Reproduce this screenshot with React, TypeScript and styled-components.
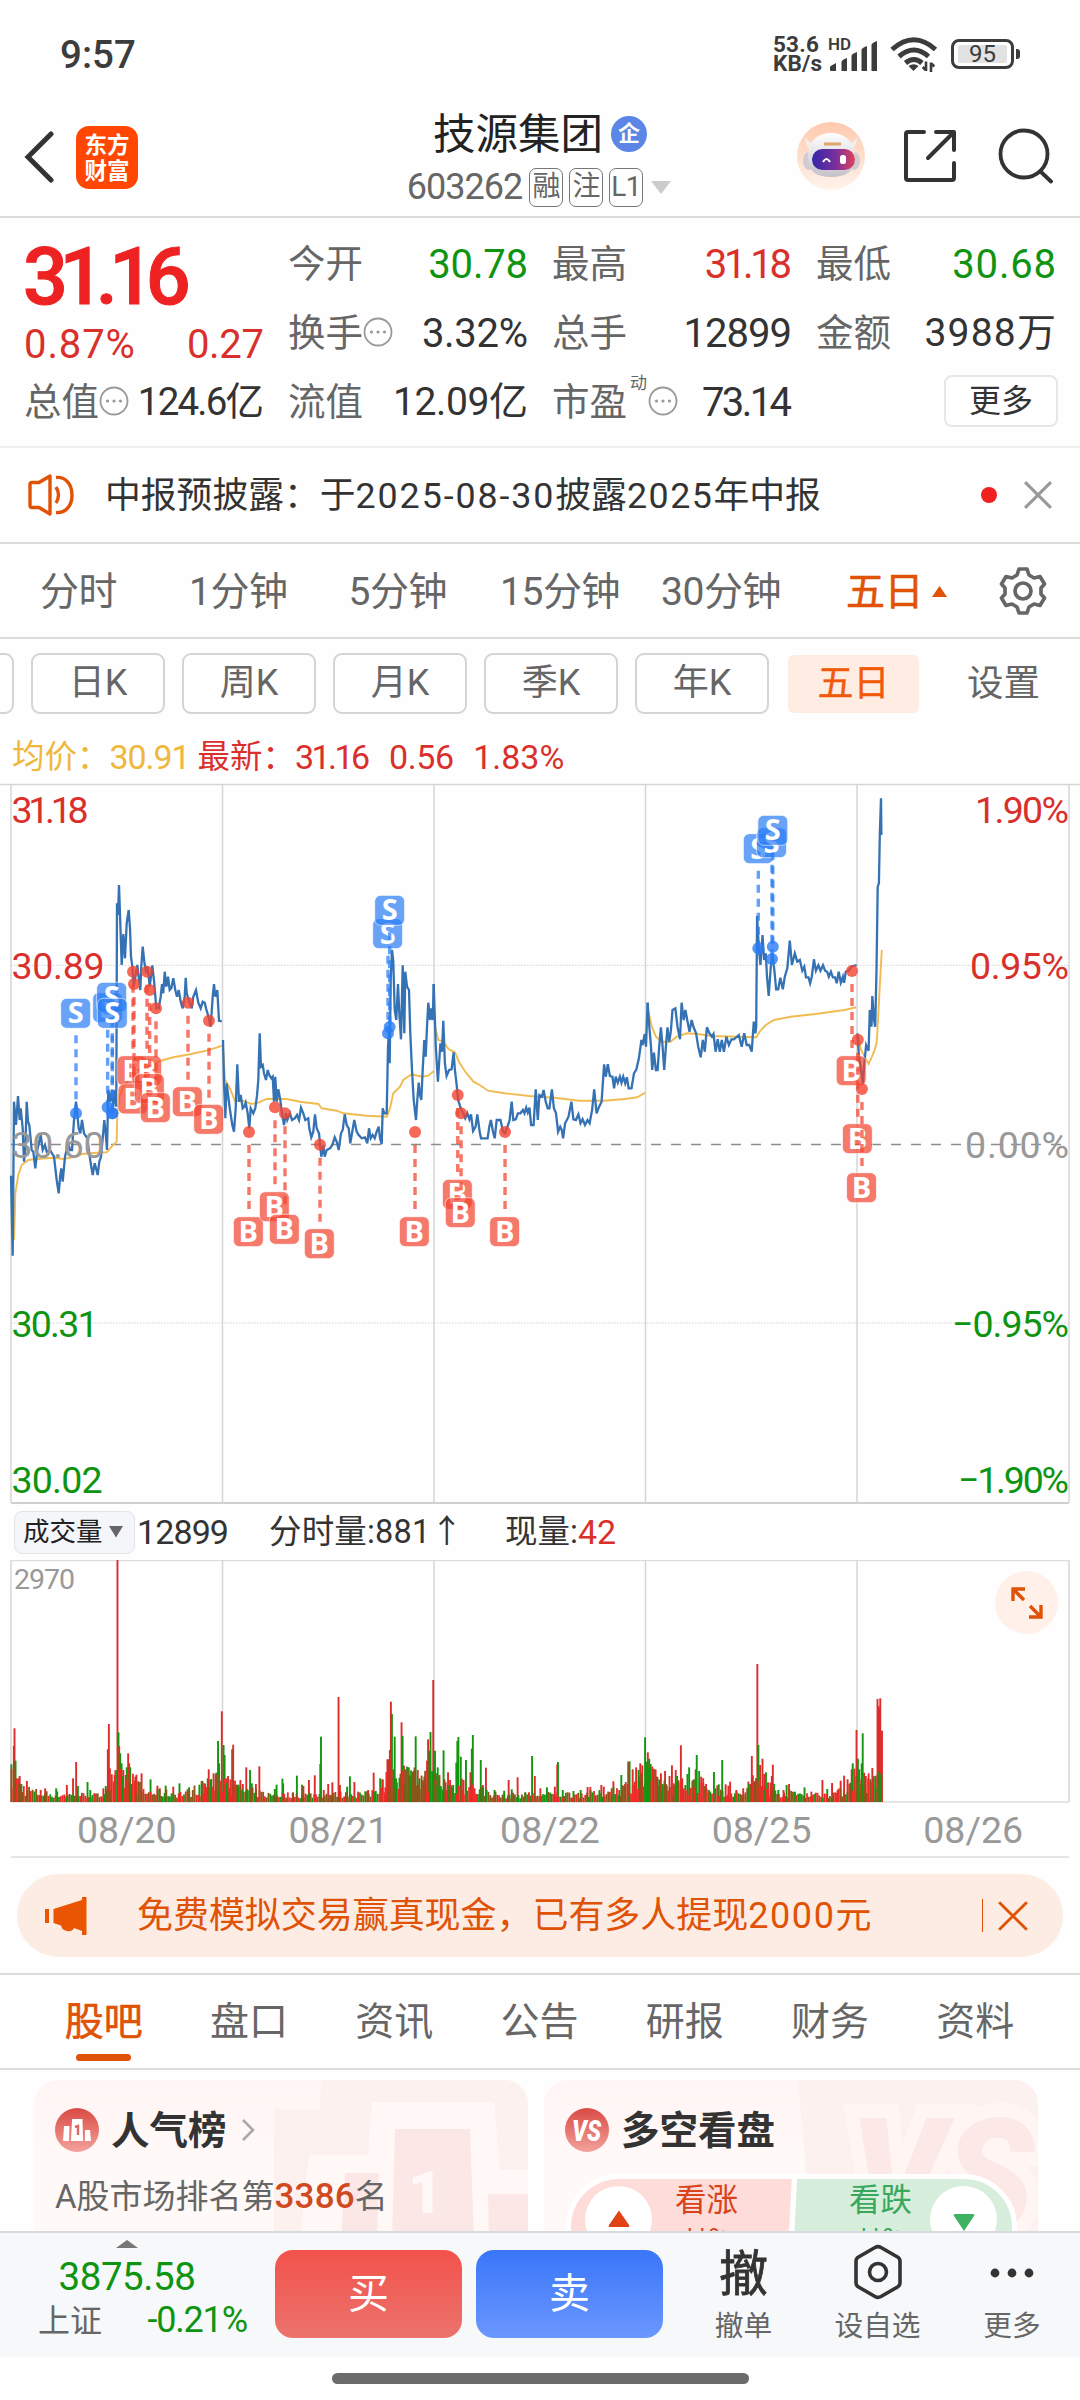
import React from 'react';
import styled, { createGlobalStyle } from 'styled-components';

const RED = '#d9302c';
const GREEN = '#0f9412';
const ORANGE = '#e05206';
const INK = '#333';
const GREY = '#666';
const SANS = `Roboto, "Noto Sans CJK SC", sans-serif`;

const Global = createGlobalStyle`
  *, *::before, *::after { box-sizing: border-box; }
  body { margin: 0; background: #fff; font-family: ${SANS}; color: ${INK}; }
  svg { display: block; flex: none; }
`;

const Page = styled.div`
  width: 1080px;
  height: 2400px;
  display: flex;
  flex-direction: column;
  overflow: hidden;
  background: #fefefe;
  line-height: 1.2;
  white-space: nowrap;
`;

type TextProps = { $s: number; $c?: string; $ls?: number; $w?: number; $mr?: number };
const Text = styled.span<TextProps>`
  font-size: ${p => p.$s}px;
  color: ${p => p.$c ?? INK};
  letter-spacing: ${p => p.$ls ?? 0}px;
  margin-right: ${p => (p.$mr ?? 0) - (p.$ls ?? 0)}px;
  font-weight: ${p => p.$w ?? 400};
`;

/* ---------- status bar ---------- */
const StatusBar = styled.div`
  flex: none;
  height: 108px;
  padding: 0 60px 0 60px;
  display: flex;
  justify-content: space-between;
  align-items: center;
`;
const Clock = styled.div`
  padding-top: 3px;
  font-size: 38.5px;
  font-weight: 500;
  color: #3c3c3c;
`;
const StatusRight = styled.div`
  display: flex;
  align-items: center;
`;
const Speed = styled.div`
  display: flex;
  flex-direction: column;
  width: 55px;
  font-size: 22.5px;
  letter-spacing: 0.2px;
  line-height: 19px;
  font-weight: 700;
  color: #3c3c3c;
`;
const Battery = styled.div`
  margin-left: 13px;
  width: 63px;
  height: 30px;
  border: 3px solid #3c3c3c;
  border-radius: 8px;
  padding: 3px 4px;
  display: flex;
`;
const Charge = styled.div`
  flex: 1;
  background: #e2e2e2;
  border-radius: 2px;
  font-size: 24px;
  line-height: 19px;
  text-align: center;
  color: #3c3c3c;
`;
const Nub = styled.div`
  width: 4px;
  height: 10px;
  margin-left: 2px;
  border-radius: 0 3px 3px 0;
  background: #3c3c3c;
`;

/* ---------- header ---------- */
const Header = styled.header`
  flex: none;
  height: 110px;
  border-bottom: 2px solid #dcdcdc;
  display: grid;
  grid-template-columns: 1fr auto 1fr;
`;
const HeadLeft = styled.div`
  display: flex;
  align-items: center;
  gap: 22px;
  padding: 2px 0 12px 24px;
`;
const AppLogo = styled.div`
  width: 62px;
  height: 63px;
  border-radius: 13px;
  background: #ff4602;
  color: #fff;
  font-size: 22.5px;
  line-height: 26px;
  font-weight: 700;
  text-align: center;
  padding-top: 6px;
`;
const HeadMid = styled.div`
  display: flex;
  flex-direction: column;
  align-items: center;
  padding-top: 1px;
`;
const TitleRow = styled.div`
  display: flex;
  align-items: center;
  height: 51px;
  gap: 8px;
`;
const Enterprise = styled.div`
  width: 36px;
  height: 36px;
  margin-top: -2px;
  border-radius: 50%;
  background: #5b86e5;
  color: #fff;
  font-size: 22px;
  line-height: 35px;
  font-weight: 700;
  text-align: center;
`;
const CodeRow = styled.div`
  display: flex;
  align-items: center;
  height: 55px;
  gap: 6px;
`;
const Tag = styled.div`
  height: 39px;
  width: 34px;
  border: 1.5px solid #777;
  border-radius: 7px;
  font-size: 28px;
  line-height: 36px;
  letter-spacing: -0.5px;
  text-align: center;
  color: ${GREY};
`;
const HeadRight = styled.div`
  display: flex;
  justify-content: flex-end;
  align-items: center;
  padding: 1px 27px 13px 0;
`;

/* ---------- quote ---------- */
const Quote = styled.section`
  flex: none;
  height: 230px;
  padding: 12px 24px 0;
  border-bottom: 2px solid #efefef;
  display: grid;
  grid-template-columns: repeat(4, 240px);
  grid-template-rows: repeat(3, 69px);
  column-gap: 24px;
`;
const Price = styled.div`
  grid-row: span 2;
  display: flex;
  flex-direction: column;
`;
const PriceBig = styled.div`
  height: 91px;
  line-height: 94px;
  font-size: 79px;
  font-weight: 500;
  -webkit-text-stroke: 1px #ee2222;
  letter-spacing: -8.5px;
  margin-left: -1px;
  color: #ee2222;
`;
const Cell = styled.div`
  display: flex;
  align-items: center;
  justify-content: space-between;
`;
const Label = styled.span`
  font-size: 37.5px;
  color: ${GREY};
  display: flex;
  align-items: center;
`;
const Sup = styled.sup`
  font-size: 17px;
  line-height: 20px;
  align-self: flex-start;
  margin: -7px 1px 0 3px;
`;
const MoreButton = styled.button`
  width: 114px;
  height: 52px;
  margin: -3px -2px 0 auto;
  border: 2px solid #e6e7ea;
  border-radius: 8px;
  background: #fff;
  font: 32px/49px ${SANS};
  color: ${INK};
  padding: 0;
`;

/* ---------- notice ---------- */
const Notice = styled.section`
  flex: none;
  height: 96px;
  border-bottom: 2px solid #dcdcdc;
  display: flex;
  align-items: center;
  padding: 0 28px 0 28px;
`;
const NoticeText = styled.div`
  flex: 1;
  margin-left: 30px;
  padding-top: 2px;
  font-size: 35.8px;
`;
const Wide = styled.span<{ $ls: number }>`
  letter-spacing: ${p => p.$ls}px;
`;
const RedDot = styled.div`
  width: 16px;
  height: 16px;
  margin-right: 27px;
  border-radius: 50%;
  background: #f02020;
`;

/* ---------- periods ---------- */
const Periods = styled.nav`
  flex: none;
  height: 95px;
  border-bottom: 2px solid #dcdcdc;
  display: flex;
  align-items: center;
  justify-content: space-between;
  padding: 0 33px 0 40px;
`;
const Period = styled.span<{ $on?: boolean; $gap?: number }>`
  display: flex;
  align-items: center;
  padding-top: 3px;
  font-size: 39px;
  letter-spacing: -0.4px;
  -webkit-text-stroke: ${p => (p.$on ? 0.6 : 0)}px ${ORANGE};
  color: ${p => (p.$on ? ORANGE : GREY)};
  margin-right: ${p => p.$gap ?? 0}px;
`;
const Chips = styled.div`
  flex: none;
  height: 89px;
  display: flex;
  align-items: center;
  margin-left: -120px;
  gap: 17px;
`;
const Chip = styled.div<{ $on?: boolean }>`
  flex: none;
  width: ${p => (p.$on ? 131 : 134)}px;
  height: ${p => (p.$on ? 58 : 61)}px;
  margin-left: ${p => (p.$on ? 2 : 0)}px;
  border: ${p => (p.$on ? 'none' : '2px solid #d4d4d4')};
  border-radius: ${p => (p.$on ? 6 : 9)}px;
  background: ${p => (p.$on ? '#ffece3' : 'transparent')};
  color: ${p => (p.$on ? '#f05a0a' : GREY)};
  font-size: 36px;
  -webkit-text-stroke: ${p => (p.$on ? 0.4 : 0)}px #f05a0a;
  line-height: ${p => (p.$on ? 58 : 57)}px;
  text-align: center;
`;
const ChipSetting = styled.span`
  margin-left: 31px;
  font-size: 36.5px;
  color: ${GREY};
`;
const Legend = styled.div`
  flex: none;
  height: 55px;
  padding: 3px 0 0 12px;
  display: flex;
  align-items: center;
`;

/* ---------- chart ---------- */
const VolumeBar = styled.div`
  flex: none;
  height: 56px;
  padding-left: 14px;
  display: flex;
  align-items: center;
`;
const VolumePick = styled.div`
  width: 121px;
  height: 43px;
  border: 1.5px solid #e2e4ea;
  border-radius: 8px;
  background: #f5f6fa;
  display: flex;
  align-items: center;
  gap: 6px;
  padding-left: 8px;
  margin-right: 2px;
`;
const VolumeWrap = styled.div`
  flex: none;
  height: 243px;
  position: relative;
`;
const Expand = styled.div`
  position: absolute;
  top: 11px;
  right: 22px;
  width: 63px;
  height: 63px;
  border-radius: 50%;
  background: #fff0e9;
  display: grid;
  place-items: center;
`;
const Dates = styled.div`
  flex: none;
  height: 55px;
  margin: 0 11px;
  padding: 2px 0 0 10px;
  border-bottom: 2px solid #e4e4e4;
  display: grid;
  grid-template-columns: repeat(5, 211.6px);
  align-items: center;
  justify-items: center;
`;

/* ---------- banner ---------- */
const Banner = styled.div`
  flex: none;
  height: 83px;
  margin: 16px 17px;
  border-radius: 42px;
  background: #fdece3;
  display: flex;
  align-items: center;
  padding: 0 35px 0 28px;
`;
const BannerText = styled.div`
  flex: 1;
  margin-left: 50px;
  padding-top: 3px;
  font-size: 36px;
  letter-spacing: -0.05px;
  color: ${ORANGE};
`;
const BannerRule = styled.div`
  width: 1.5px;
  height: 33px;
  margin-right: 15px;
  background: ${ORANGE};
`;

/* ---------- tabs ---------- */
const Tabs = styled.nav`
  flex: none;
  height: 97px;
  border-top: 2px solid #dcdcdc;
  border-bottom: 2px solid #dcdcdc;
  padding: 0 32px 0 31px;
  display: grid;
  grid-template-columns: repeat(7, 1fr);
`;
const Tab = styled.div<{ $on?: boolean }>`
  display: flex;
  flex-direction: column;
  align-items: center;
  font-size: 39px;
  line-height: 95px;
  height: 93px;
  -webkit-text-stroke: ${p => (p.$on ? 0.6 : 0)}px ${ORANGE};
  color: ${p => (p.$on ? ORANGE : GREY)};
  &::after {
    content: '';
    width: 55px;
    height: 7px;
    margin-top: -16px;
    border-radius: 4px;
    background: ${p => (p.$on ? ORANGE : 'transparent')};
  }
`;

/* ---------- cards ---------- */
const Cards = styled.section`
  flex: none;
  height: 161px;
  padding: 10px 42px 0 34px;
  display: flex;
  gap: 16px;
  overflow: hidden;
`;
const Card = styled.div`
  position: relative;
  width: 494px;
  height: 240px;
  border-radius: 24px;
  overflow: hidden;
  background: linear-gradient(#fff5f4, #fffaf8 40%);
`;
const CardArt = styled.svg`
  position: absolute;
  inset: 0;
`;
const CardHead = styled.div`
  position: relative;
  display: flex;
  align-items: center;
  height: 44px;
  margin: 28px 0 0 21px;
`;
const CardTitle = styled.span`
  margin: 0 14px 0 12px;
  padding-top: 2px;
  font-size: 38.5px;
  font-weight: 700;
`;
const Rank = styled.div`
  position: relative;
  margin: 25px 0 0 21px;
  font-size: 33px;
  line-height: 40px;
  color: ${GREY};
`;
const Vote = styled.div`
  position: relative;
  margin: 22px 0 0 22px;
  width: 451px;
  height: 106px;
  border: 5px solid #fff;
  border-radius: 53px;
  overflow: hidden;
  display: flex;
  justify-content: space-between;
  padding: 7px 15px 0 14px;
  background: linear-gradient(93deg, #fddcd9 0 49.4%, #fff 49.6% 50.6%, #d7eedd 50.8%);
`;
const VoteSide = styled.div<{ $gap: number }>`
  display: flex;
  gap: ${p => p.$gap}px;
`;
const VoteDisc = styled.div`
  width: 67px;
  height: 67px;
  border-radius: 50%;
  background: #fff;
  display: flex;
  justify-content: center;
`;
const VoteText = styled.div<{ $c: string }>`
  display: flex;
  flex-direction: column;
  align-items: center;
  margin-top: -4px;
  font-size: 31.5px;
  line-height: 38px;
  color: ${p => p.$c};
`;
const VotePct = styled.span`
  font-size: 29px;
  line-height: 39px;
`;

/* ---------- bottom bar ---------- */
const Dock = styled.footer`
  flex: none;
  height: 126px;
  border-top: 2px solid #d8dade;
  background: #f6f8fa;
  display: flex;
`;
const Index = styled.div`
  width: 254px;
  margin-right: 21px;
  display: flex;
  flex-direction: column;
  align-items: center;
  padding-top: 7px;
`;
const IndexValue = styled.div`
  margin-top: 8px;
  height: 43px;
  line-height: 42px;
  font-size: 38.5px;
  letter-spacing: -0.4px;
  color: ${GREEN};
`;
const IndexRow = styled.div`
  width: 100%;
  padding: 0 6px 0 38px;
  display: flex;
  align-items: center;
  justify-content: space-between;
  height: 44px;
`;
const Trade = styled.button<{ $from: string; $to: string }>`
  width: 187px;
  height: 88px;
  margin: 17px 14px 0 0;
  border: 0;
  border-radius: 18px;
  background: linear-gradient(${p => p.$from}, ${p => p.$to});
  color: #fff;
  font: 41px/88px ${SANS};
  padding: 0;
`;
const Action = styled.div<{ $w: number }>`
  width: ${p => p.$w}px;
  display: flex;
  flex-direction: column;
  align-items: center;
  padding-top: 10px;
`;
const ActionIcon = styled.div<{ $drop?: number }>`
  height: 57px;
  display: flex;
  align-items: center;
  font-size: 49px;
  -webkit-text-stroke: 0.8px ${INK};
  line-height: 57px;
  padding-top: ${p => p.$drop ?? 0}px;
`;
const ActionLabel = styled.div`
  margin-top: 9px;
  font-size: 28.7px;
  line-height: 34px;
  color: ${GREY};
`;
const HomeArea = styled.div`
  flex: none;
  height: 43px;
  display: flex;
  justify-content: center;
  padding-top: 16px;
`;
const HomeBar = styled.div`
  width: 417px;
  height: 11px;
  border-radius: 6px;
  background: #6b6b6b;
`;

/* ---------- chart data ---------- */
type Frame = { x: number; kx: number };
const LEFT: Frame = { x: 0, kx: 1 / 3 };
const RIGHT: Frame = { x: 430, kx: 650 / 1568 };

const px = (f: Frame, x: number) => f.x + x * f.kx;
const py = (y: number) => 780 + y / 3;

const toPoints = (f: Frame, raw: string) =>
  raw
    .trim()
    .split(/\s+/)
    .map(p => {
      const [x, y] = p.split(',').map(Number);
      return `${px(f, x).toFixed(1)},${py(y).toFixed(1)}`;
    })
    .join(' ');

const DAYS: { f: Frame; price: string; avg: string }[] = [
  {
    f: LEFT,
    price: `33,1187 38,1427 42,965 48,1035 54,948 59,1020 62,985 68,1045 72,1145 76,1110 80,965 84,1025 88,1035 95,1110 100,1115 106,1165 112,1110 122,1065 128,1110 135,1095 140,1115 150,1110 162,1130 170,1200 176,1240 181,1185 184,1165 188,1205 195,1130 205,1090 210,1110 216,1110 222,1020 228,965 236,1045 241,1060 246,1020 252,1060 262,1075 268,1120 272,1150 278,1185 284,1150 288,1165 293,1185 298,1145 303,1130 308,1075 313,1020 317,1060 321,1110 325,930 331,965 336,930 340,980 345,930 349,980 351,370 354,405 357,315 361,430 365,555 370,462 375,535 380,430 386,390 390,445 393,530 397,560 401,620 406,590 412,555 417,600 421,630 424,560 428,500 433,545 438,580 443,560 449,620 457,556 463,610 469,685 476,685 482,650 486,612 490,640 494,575 499,620 504,590 509,630 514,625 520,595 526,630 531,650 536,630 542,665 548,685 554,650 557,593 560,640 566,660 575,685 580,650 588,630 595,668 602,685 608,665 614,668 618,685 624,705 632,740 638,650 642,612 646,650 652,630 657,722 665,724`,
    avg: `42,1380 44,1320 46,1240 55,1185 65,1155 85,1140 110,1137 160,1133 190,1137 230,1130 245,1122 290,1118 320,1117 335,1100 350,1085 352,1000 358,950 370,920 400,880 430,865 480,843 520,832 570,823 620,812 668,797`,
  },
  {
    f: LEFT,
    price: `669,780 672,905 676,1015 680,910 685,950 690,990 697,1035 702,1055 707,985 712,853 717,965 722,945 728,985 733,980 737,968 743,1000 748,1045 752,985 760,1000 766,985 771,947 775,900 779,760 783,860 788,855 792,880 798,900 803,870 808,885 814,895 818,890 822,965 826,890 830,965 835,928 841,960 846,1000 852,1035 858,1000 862,1020 870,1000 876,1020 884,1015 891,1005 897,1020 903,983 910,1000 916,1020 925,1015 928,1045 934,1072 940,1055 945,1003 950,1045 957,1060 961,1100 964,1130 970,1095 974,1130 980,1110 990,1105 997,1095 1004,1072 1010,1085 1016,1110 1023,1060 1028,1050 1034,1003 1040,1035 1046,1045 1051,1090 1056,1060 1063,1020 1070,1055 1076,1065 1085,1075 1095,1072 1102,1090 1107,1045 1112,1075 1118,1065 1124,1075 1130,1055 1136,1040 1140,1075 1145,1093 1148,985 1153,1000 1160,1000 1164,800 1168,740 1169,850 1172,600 1176,510 1180,545 1184,690 1189,720 1194,612 1198,700 1203,778 1208,556 1213,760 1216,575 1221,620 1227,630 1231,760 1236,870 1241,960 1248,1020 1252,960 1256,908 1260,945 1264,960 1268,870 1273,780 1277,830 1281,740 1285,668 1290,720 1294,685 1298,720 1301,612`,
    avg: `669,800 675,900 690,925 705,963 730,963 755,972 775,968 800,957 860,957 900,965 955,972 965,985 1010,992 1030,1000 1100,1007 1160,1010 1170,985 1180,940 1200,920 1210,900 1235,883 1265,890 1285,887 1302,873`,
  },
  {
    f: RIGHT,
    price: `9,612 14,800 19,905 25,790 29,815 32,722 36,850 40,888 46,870 52,868 57,817 60,870 64,910 68,960 74,985 80,1000 85,1015 90,1000 95,1018 99,1003 104,1053 110,1040 114,1003 120,1055 123,1075 139,1075 143,1040 147,1020 152,1055 156,1075 161,1020 170,1020 176,1055 181,1060 187,1040 192,1020 197,965 201,1020 207,1018 212,1000 218,1000 224,990 228,1000 232,983 236,998 240,983 244,1035 250,1035 255,928 260,1020 264,945 270,950 274,930 279,965 284,985 288,985 294,928 299,985 304,1000 309,1055 314,1040 318,1050 321,1075 326,1030 334,1010 341,965 346,1018 352,1020 358,1003 363,1030 368,1018 374,1035 380,1020 385,1030 391,990 396,928 402,1000 408,980 414,965 420,853 424,890 429,853 434,888 440,890 444,925 448,890 453,908 458,890 462,908 466,890 471,910 475,892 479,925 486,925 492,880 498,868 504,835 510,780 513,795 518,762 521,800 525,668`,
    avg: `12,740 20,780 32,785 45,808 60,817 70,845 85,875 105,905 120,915 140,932 180,940 240,948 300,953 360,962 420,962 470,957 500,952 519,938`,
  },
  {
    f: RIGHT,
    price: `525,668 529,740 533,800 536,870 540,818 545,870 549,870 553,800 557,742 561,800 565,870 569,800 573,742 577,785 581,755 585,690 592,685 597,740 603,778 607,668 612,720 616,690 621,722 626,755 631,720 636,742 642,760 647,800 653,832 658,780 663,815 668,742 674,760 680,770 684,762 689,815 694,778 699,815 704,780 709,815 715,770 721,795 727,778 733,778 745,765 752,800 758,760 764,795 770,795 776,815 781,725 785,760 787,740 789,408 793,500 797,555 802,465 806,540 810,520 813,590 817,648 822,560 826,520 831,575 835,628 840,628 845,593 851,628 856,590 862,565 868,482 873,555 880,520 886,545 892,540 898,572 903,560 907,592 913,592 917,610 921,590 926,538 931,572 937,556 942,572 948,556 953,572 958,575 962,590 967,575 972,592 977,592 981,610 986,575 991,608 996,590 999,608 1003,575 1010,572 1016,560 1029,555`,
    avg: `526,690 535,740 545,770 560,785 580,785 595,770 620,760 645,762 680,768 740,770 787,772 795,755 810,735 830,720 870,710 930,702 1000,690 1028,682`,
  },
  {
    f: RIGHT,
    price: `1031,760 1035,830 1040,870 1044,910 1048,850 1052,795 1058,812 1061,690 1065,740 1067,648 1071,720 1074,740 1077,570 1080,320 1083,310 1085,165 1088,55 1089,165`,
    avg: `1032,770 1040,810 1050,835 1058,852 1066,830 1072,812 1077,790 1079,760 1084,640 1090,510`,
  },
];

type Mark = [Frame, 'B' | 'S', number, number, number, number];
const MARKS: Mark[] = [
  [LEFT, 'S', 227, 700, 228, 1000],
  [LEFT, 'S', 323, 683, 323, 982],
  [LEFT, 'S', 335, 652, 337, 1000],
  [LEFT, 'S', 337, 700, 337, 1000],
  [LEFT, 'S', 1163, 461, 1164, 760],
  [LEFT, 'S', 1169, 391, 1169, 741],
  [LEFT, 'B', 396, 872, 399, 575],
  [LEFT, 'B', 440, 872, 441, 575],
  [LEFT, 'B', 399, 957, 402, 612],
  [LEFT, 'B', 448, 926, 449, 630],
  [LEFT, 'B', 466, 983, 468, 685],
  [LEFT, 'B', 562, 965, 564, 668],
  [LEFT, 'B', 626, 1018, 627, 722],
  [LEFT, 'B', 745, 1355, 747, 1056],
  [LEFT, 'B', 823, 1280, 825, 982],
  [LEFT, 'B', 853, 1348, 855, 1000],
  [LEFT, 'B', 958, 1391, 960, 1094],
  [LEFT, 'B', 1243, 1355, 1245, 1056],
  [RIGHT, 'B', 66, 1243, 67, 945],
  [RIGHT, 'B', 73, 1298, 75, 1000],
  [RIGHT, 'B', 180, 1355, 181, 1056],
  [RIGHT, 'B', 1016, 872, 1018, 573],
  [RIGHT, 'B', 1031, 1076, 1032, 779],
  [RIGHT, 'B', 1041, 1223, 1042, 927],
  [RIGHT, 'S', 792, 206, 792, 505],
  [RIGHT, 'S', 824, 188, 825, 537],
  [RIGHT, 'S', 827, 151, 827, 500],
];

const GRID_X = [11, 222.5, 434, 645.5, 857, 1069];

const Axis = ({ y, c, l, r, lw, rw }: { y: number; c: string; l: string; r: string; lw: number; rw: number }) => (
  <g fill={c} fontSize="37.5" fontFamily={SANS}>
    <text x={11.5} y={y} textLength={lw}>{l}</text>
    <text x={1069 - rw} y={y} textLength={rw}>{r}</text>
  </g>
);

const PriceChart = () => (
  <svg width="1080" height="721" viewBox="0 783 1080 721">
    <path d="M0 784.5H1080" stroke="#d6d6d6" strokeWidth="1.6" />
    {GRID_X.map(x => (
      <path key={x} d={`M${x} 785V1503`} stroke="#d6d6d6" strokeWidth="1.5" />
    ))}
    <path d="M11 1503H1069" stroke="#d0d0d0" strokeWidth="2" />
    <path d="M11 965.3H1069M11 1323H1069" stroke="#d2d2d2" strokeWidth="1" strokeDasharray="1.5 1.5" />
    <path d="M11 1144.5H1069" stroke="#8c8c8c" strokeWidth="1.7" strokeDasharray="10 10" />
    {DAYS.map((d, i) => (
      <polyline key={i} points={toPoints(d.f, d.avg)} fill="none" stroke="#f0bb50" strokeWidth="1.9" />
    ))}
    {DAYS.map((d, i) => (
      <polyline key={i} points={toPoints(d.f, d.price)} fill="none" stroke="#3572b4" strokeWidth="2.3" />
    ))}
    <Axis y={823} c={RED} l="31.18" r="1.90%" lw={77} rw={94} />
    <Axis y={979} c={RED} l="30.89" r="0.95%" lw={93} rw={99} />
    <Axis y={1158} c="#999" l="30.60" r="0.00%" lw={93} rw={104} />
    <Axis y={1336.5} c={GREEN} l="30.31" r="−0.95%" lw={87} rw={117} />
    <Axis y={1492.5} c={GREEN} l="30.02" r="−1.90%" lw={91} rw={111} />
    {MARKS.map(([f, kind, bx, by, dx, dy], i) => {
      const sell = kind === 'S';
      const x = px(f, bx);
      const y = py(by);
      const X = px(f, dx);
      const Y = py(dy);
      const c = sell ? '#2a7df5' : '#f4432f';
      return (
        <g key={i}>
          <path
            d={sell ? `M${X} ${y + 22}V${Y}` : `M${X} ${Y + 13}V${y - 20}`}
            stroke={c}
            opacity="0.72"
            strokeWidth="3.4"
            strokeDasharray="8 6"
          />
          <circle cx={X} cy={Y} r="6" fill={c} opacity="0.8" />
          <rect x={x - 15} y={y - 15} width="30" height="30" rx="6" fill={c} opacity="0.7" stroke="#fff" strokeWidth="0.8" />
          <text
            x={x}
            y={y + 10}
            textAnchor="middle"
            fontSize="29"
            fontWeight="700"
            fontFamily='"Open Sans", sans-serif'
            fill="#fff"
          >
            {kind}
          </text>
        </g>
      );
    })}
  </svg>
);

/* volume peaks: position, top edge, r(ise) or g(fall) */
const PEAKS_A =
  '33,853,g 40,798,r 42,745,r 45,842,g 53,895,r 57,888,r 62,912,g 78,903,r 118,930,r 131,925,r 163,925,g 194,915,r 212,895,r 221,846,r 226,918,g 254,906,g 262,930,g 300,925,r 307,918,g 313,808,r 316,732,r 319,865,r 333,885,r 341,240,r 344,757,g 346,798,r 349,820,g 353,850,g 358,870,r 365,885,r 368,862,g 372,820,r 375,850,r 378,862,g 383,912,g 393,890,r 396,884,r 411,880,r 437,898,g 457,917,r 464,925,r 481,917,g 503,920,r 521,910,g 549,922,g 579,914,g 588,903,r 593,910,r 603,895,g 606,868,r 613,897,g 620,880,r 628,878,g 633,783,g 636,850,g 644,694,r 649,795,g 652,825,g 657,895,r 662,888,r 669,898,r 674,808,g 677,794,r 681,915,g 690,917,r 698,900,r 705,912,r 715,862,r 726,870,g 731,910,g 743,912,r 753,859,r 798,927,g 803,914,g 820,896,g 822,910,g 850,938,r 862,887,g 877,914,g 881,918,r 897,900,r 914,886,r 930,852,g 932,770,g 940,930,r 953,912,r 965,907,r 983,651,r 987,915,r 1008,920,g 1016,889,g 1029,906,r 1040,935,r 1069,930,r 1085,878,r 1104,895,g 1110,898,r 1119,922,r 1125,838,r 1128,838,r 1132,810,g 1135,665,r 1138,702,g 1143,868,g 1146,770,g 1150,895,g 1160,893,g 1166,727,r 1169,768,g 1173,857,r 1178,868,g 1182,860,g 1187,862,g 1192,890,g 1202,873,g 1207,769,g 1213,870,r 1218,895,g 1225,900,r 1232,890,r 1240,842,r 1243,778,r 1247,812,g 1250,756,g 1258,600,r 1263,812,g 1266,880,g 1271,862,g 1276,885,r 1288,811,g 1294,907,r 1301,877,r 1307,900,r 1314,922,g 1325,848,g 1328,783,g 1331,771,g 1338,830,g 1341,896,r 1346,900,r 1353,840,g 1366,877,r 1370,806,g 1373,765,g 1378,925,r 1396,840,g 1402,915,r 1411,863,r 1436,930,g 1464,932,g 1477,900,r 1486,928,g 1503,892,r 1525,937,g 1536,937,r 1545,828,g 1553,888,r';
const PEAKS_B =
  '1,925,r 20,922,g 43,920,r 50,853,r 52,846,g 66,930,g 97,933,g 118,930,g 138,921,r 146,921,r 178,915,r 185,920,r 208,925,r 213,904,r 230,930,r 236,885,g 247,912,r 256,845,r 260,844,g 269,868,r 275,905,r 279,862,r 286,870,g 291,850,r 297,856,r 305,772,g 308,845,g 313,817,r 317,836,g 321,852,g 330,868,r 338,890,r 343,917,r 351,880,r 356,912,g 363,873,r 368,917,r 376,888,r 383,856,r 388,910,r 394,870,r 398,888,g 409,796,r 413,895,r 422,915,g 428,882,g 433,862,g 443,905,g 447,898,g 452,868,r 455,825,g 462,873,g 468,890,r 474,908,r 482,912,r 490,930,g 505,876,g 519,913,g 529,840,g 539,913,r 547,917,r 552,905,r 570,930,r 590,925,r 605,905,r 612,912,r 615,828,r 618,886,r 625,903,r 631,552,r 634,795,g 639,855,r 646,836,r 651,882,r 656,877,g 662,907,r 669,908,r 673,888,r 676,854,r 680,912,g 692,930,g 707,930,r 716,915,g 723,912,r 740,935,g 768,922,g 788,935,r 820,900,r 834,927,g 848,909,r 864,930,r 873,902,r 883,887,r 893,898,r 901,908,g 905,868,r 908,850,g 913,866,r 919,750,r 923,836,g 927,868,g 930,912,g 934,850,g 937,760,g 941,878,r 946,888,r 953,895,g 960,905,g 965,864,r 975,887,r 980,657,r 983,678,r 985,685,r 988,655,r 993,752,r';

const BASE = 966;
const parsePeaks = (raw: string, x0: number) =>
  raw.split(' ').map(p => {
    const [x, top, c] = p.split(',');
    return { x: x0 + Number(x) / 2.904, h: (BASE - Number(top)) / 3, c: c === 'r' ? '#dc2d2a' : '#12960f' };
  });
const PEAKS = [...parsePeaks(PEAKS_A, 0), ...parsePeaks(PEAKS_B, 540)];

const ENVELOPE: [number, number][] = [
  [11, 34], [24, 18], [40, 10], [100, 7], [114, 32], [130, 32], [145, 12], [185, 10], [205, 22], [225, 30], [240, 16],
  [270, 8], [370, 9], [385, 32], [430, 34], [450, 22], [480, 16], [500, 7], [600, 10], [625, 20], [650, 36], [670, 20],
  [700, 24], [720, 14], [740, 8], [755, 26], [775, 12], [820, 8], [840, 12], [855, 30], [882, 30],
];
const envelope = (x: number) => {
  const i = Math.max(1, ENVELOPE.findIndex(([ex]) => ex >= x));
  const [x0, h0] = ENVELOPE[i - 1];
  const [x1, h1] = ENVELOPE[i];
  return h0 + ((x - x0) / (x1 - x0)) * (h1 - h0);
};

const NOISE = (() => {
  let seed = 7;
  const rnd = () => {
    seed = (seed * 16807) % 2147483647;
    return seed / 2147483647;
  };
  const out: { x: number; h: number; c: string }[] = [];
  for (let x = 11.5; x < 881; x += 1.76) {
    const k = rnd();
    out.push({ x, h: 2 + envelope(x) * (0.2 + 0.8 * rnd()), c: k < 0.42 ? '#ee2a28' : k < 0.68 ? '#12960f' : '#8a5518' });
  }
  return out;
})();

const VolumeChart = () => (
  <svg width="1080" height="243" viewBox="0 1560 1080 243">
    <path d="M11 1560.5H1069M11 1802H1069" stroke="#dedede" strokeWidth="1.6" />
    {GRID_X.map(x => (
      <path key={x} d={`M${x} 1560V1802`} stroke="#d6d6d6" strokeWidth="1.5" />
    ))}
    {PEAKS.map((b, i) => (
      <rect key={i} x={b.x - 0.9} y={1802 - b.h} width="1.9" height={b.h} fill={b.c} />
    ))}
    {NOISE.map((b, i) => (
      <rect key={i} x={b.x - 0.9} y={1802 - b.h} width="1.8" height={b.h} fill={b.c} />
    ))}
    <text x="14" y="1588.500" fontSize="28.500" textLength="61" fontFamily={SANS} fill="#999">
      2970
    </text>
  </svg>
);

/* ---------- icons ---------- */
const Ellipsis = () => (
  <svg width="30" height="30" viewBox="0 0 30 30" fill="none" stroke="#999" strokeWidth="1.8" style={{ marginTop: -3 }}>
    <circle cx="15" cy="15" r="13.500" />
    <path d="M8.5 15h0M15 15h0M21.5 15h0" strokeWidth="3.2" strokeLinecap="round" />
  </svg>
);

const Cross = ({ size, c, w = 2.8 }: { size: number; c: string; w?: number }) => (
  <svg width={size} height={size} viewBox="0 0 26 26" stroke={c} strokeWidth={w}>
    <path d="M1 1L25 25M25 1L1 25" />
  </svg>
);

const SignalIcon = () => (
  <svg width="50" height="36" viewBox="0 0 50 36" fill="#3c3c3c">
    <text x="0" y="13.5" fontSize="17" fontWeight="600" textLength="23" fontFamily={SANS}>HD</text>
    <path d="M2 34v-3q0-1 6-4v8H3q-1 0-1-1zM13.500 35v-9q0-2 5.500-4v13zM23.500 35v-15q0-2 5.500-4v19zM33.500 35v-21q0-2 5.500-4v25zM43.500 35v-26q0-2 5.500-4v30z" />
  </svg>
);

const WifiIcon = () => (
  <svg style={{ marginLeft: 12 }} width="48" height="38" viewBox="0 0 48 38" fill="none" stroke="#3c3c3c" strokeWidth="5">
    <path d="M2 14.500Q24-5 45.500 14.500M9 21.500Q24 8.500 38.500 21.500M15.500 28Q24 21 32 28" />
    <path d="M18.500 31q5.500-3.500 10 0l-5 5z" fill="#3c3c3c" stroke="none" />
    <path d="M36 26.500v9.500M35.700 35l-3-3M41 37v-9.500M41.300 28.500l3 3" strokeWidth="2.600" />
  </svg>
);

const Robot = () => (
  <svg width="68" height="68" viewBox="0 0 68 68">
    <defs>
      <linearGradient id="halo" x2="0" y2="1">
        <stop offset="0" stopColor="#ffc9ad" />
        <stop offset="1" stopColor="#fff3ec" />
      </linearGradient>
      <linearGradient id="visor">
        <stop offset="0" stopColor="#3527a8" />
        <stop offset=".55" stopColor="#7a2f9c" />
        <stop offset="1" stopColor="#e0435a" />
      </linearGradient>
      <linearGradient id="shell" x2="0" y2="1">
        <stop offset="0" stopColor="#fff" />
        <stop offset="1" stopColor="#c4c1c8" />
      </linearGradient>
    </defs>
    <circle cx="34" cy="34" r="34" fill="url(#halo)" />
    <path d="M8 15q0 9 6 13l8-6q-10 1-14-7zM60 15q0 9-6 13l-8-6q10 1 14-7z" fill="#f2eeee" />
    <ellipse cx="12" cy="39" rx="6" ry="9" fill="#cfcbd0" />
    <ellipse cx="57" cy="39" rx="6" ry="9" fill="#cfcbd0" />
    <path d="M34 11c15 0 24 10 24 25 0 13-9 19-24 19S11 49 11 36c0-15 8-25 23-25z" fill="url(#shell)" />
    <path d="M27 22h17" stroke="#e0a56c" strokeWidth="3" />
    <rect x="15" y="27" width="43" height="21" rx="10.500" fill="url(#visor)" />
    <path d="M26 40q3.500-6 7 0" stroke="#fff" strokeWidth="2.200" fill="none" />
    <rect x="43" y="33" width="6" height="9" rx="2.500" fill="#fff" />
  </svg>
);

const ShareIcon = () => (
  <svg width="56" height="56" viewBox="0 0 56 56" fill="none" stroke="#333" strokeWidth="4" style={{ margin: '0 39px 0 37px' }}>
    <path d="M22 4H6q-2 0-2 2V50q0 2 2 2H50q2 0 2-2V35M34 4H52V22M51 5L26 30" strokeLinecap="round" strokeLinejoin="round" />
  </svg>
);

const SearchIcon = () => (
  <svg width="56" height="56" viewBox="0 0 56 56" fill="none" stroke="#333" strokeWidth="3.8">
    <circle cx="27" cy="26" r="23.500" />
    <path d="M43.500 43.500L54 53.500" strokeLinecap="round" />
  </svg>
);

const SpeakerIcon = () => (
  <svg width="47" height="42" viewBox="0 0 47 42" fill="none" stroke={ORANGE} strokeWidth="3.400" strokeLinejoin="round">
    <path d="M2 10.500q0-2 2-2H11L22 2V40L11 33.500H4q-2 0-2-2z" />
    <path d="M28 13q5 8 0 16M28 3.500c8-1 16 5 16 17.500s-8 18.500-16 17.500" />
  </svg>
);

const GearIcon = () => (
  <svg width="48" height="50" viewBox="0 0 48 50" fill="none" stroke="#666" strokeWidth="3.700" strokeLinejoin="round">
    <path d="M20 3h8l2 6 5 3 6-1.500 4.500 7.500-3.500 4v6l3.500 4L41 39.500 35 38l-5 3-2 6h-8l-2-6-5-3-6 1.500L2.500 32 6 28v-6l-3.500-4L7 10.500 13 12l5-3z" />
    <circle cx="24" cy="25" r="8" />
  </svg>
);

const HornIcon = () => (
  <svg width="42" height="38" viewBox="0 0 42 38" fill="#ea5504">
    <path d="M0 12h4v14H0zM8.500 12L37 3V0h4.500v38h-4.500v-4l-8-3q-2 4-7 3t-6-5.500L8.500 26z" />
  </svg>
);

const PodiumBadge = () => (
  <svg width="44" height="44" viewBox="0 0 44 44">
    <defs>
      <linearGradient id="badge" x2="0" y2="1">
        <stop offset="0" stopColor="#d94a43" />
        <stop offset="1" stopColor="#f3a29c" />
      </linearGradient>
    </defs>
    <circle cx="22" cy="22" r="22" fill="url(#badge)" />
    <path d="M9 18h5.500l-.5 15H8zM17 11H27.500l.5 22H16zM30 22h5l1 11h-6z" fill="#fff" />
    <path d="M20 19l3-1v9" stroke="#dc6a64" strokeWidth="2.400" fill="none" />
  </svg>
);

const VsBadge = () => (
  <svg width="44" height="44" viewBox="0 0 44 44">
    <circle cx="22" cy="22" r="22" fill="url(#badge)" />
    <text x="21.500" y="33" textAnchor="middle" textLength="29" lengthAdjust="spacingAndGlyphs" fontSize="30" fontWeight="900" fontStyle="italic" fontFamily={SANS} fill="#fff">
      VS
    </text>
  </svg>
);

const PodiumArt = () => (
  <CardArt width="494" height="160" viewBox="0 0 494 160">
    <path d="M287 0H494V160H240V29H286z" fill="#fdf1ef" />
    <path d="M275 75H334L338 22H460L466 90H494V160H266z" fill="#fff8f6" />
    <path d="M361 49H436L440 160H358zM311 93H345L343 160H307zM454 114H494V160H455z" fill="#fbe8e6" />
    <text x="374" y="133" fontSize="60" fontWeight="900" fontFamily={SANS} fill="#fff8f6">1</text>
  </CardArt>
);

const VersusArt = () => (
  <CardArt width="494" height="160" viewBox="0 0 494 160">
    <path d="M254 0H494V160H268z" fill="#fdf1ef" />
    <text x="306" y="150" fontSize="158" fontWeight="900" fontStyle="italic" fontFamily={SANS} fill="#fce8e6" stroke="#fff6f4" strokeWidth="28" paintOrder="stroke" textLength="184" lengthAdjust="spacingAndGlyphs">
      VS
    </text>
  </CardArt>
);

const TABS = ['股吧', '盘口', '资讯', '公告', '研报', '财务', '资料'];

export default function App() {
  return (
    <Page>
      <Global />
      <StatusBar>
        <Clock>9:57</Clock>
        <StatusRight>
          <Speed>
            <span>53.6</span>
            <span>KB/s</span>
          </Speed>
          <SignalIcon />
          <WifiIcon />
          <Battery>
            <Charge>95</Charge>
          </Battery>
          <Nub />
        </StatusRight>
      </StatusBar>

      <Header>
        <HeadLeft>
          <svg width="30" height="52" viewBox="0 0 30 52" fill="none" stroke="#333" strokeWidth="5">
            <path d="M27 3L4 26L27 49" strokeLinecap="round" />
          </svg>
          <AppLogo>东方<br />财富</AppLogo>
        </HeadLeft>
        <HeadMid>
          <TitleRow>
            <Text $s={42.5} $c="#222">技源集团</Text>
            <Enterprise>企</Enterprise>
          </TitleRow>
          <CodeRow>
            <Text $s={36} $c={GREY} $ls={-1}>603262</Text>
            <Tag>融</Tag>
            <Tag>注</Tag>
            <Tag>L1</Tag>
            <svg width="24" height="14" viewBox="-2 0 24 14" fill="#ccc"><path d="M0 0H20L10 13z" /></svg>
          </CodeRow>
        </HeadMid>
        <HeadRight>
          <Robot />
          <ShareIcon />
          <SearchIcon />
        </HeadRight>
      </Header>

      <Quote>
        <Price>
          <PriceBig>31.16</PriceBig>
          <Cell>
            <Text $s={40} $c={RED} $ls={0.9}>0.87%</Text>
            <Text $s={40} $c={RED} $ls={-0.3}>0.27</Text>
          </Cell>
        </Price>
        <Cell><Label>今开</Label><Text $s={40} $c={GREEN} $ls={-0.2}>30.78</Text></Cell>
        <Cell><Label>最高</Label><Text $s={40} $c={RED} $ls={-3.3}>31.18</Text></Cell>
        <Cell><Label>最低</Label><Text $s={40} $c={GREEN} $ls={0.8}>30.68</Text></Cell>
        <Cell><Label>换手<Ellipsis /></Label><Text $s={40} $ls={-0.3}>3.32%</Text></Cell>
        <Cell><Label>总手</Label><Text $s={40} $ls={-1}>12899</Text></Cell>
        <Cell><Label>金额</Label><Text $s={39} $ls={1.2}>3988万</Text></Cell>
        <Cell><Label>总值<Ellipsis /></Label><Text $s={38.5} $ls={-1.8}>124.6亿</Text></Cell>
        <Cell><Label>流值</Label><Text $s={39} $ls={-0.4}>12.09亿</Text></Cell>
        <Cell><Label>市盈<Sup>动</Sup><Ellipsis /></Label><Text $s={40} $ls={-2.6}>73.14</Text></Cell>
        <Cell><MoreButton>更多</MoreButton></Cell>
      </Quote>

      <Notice>
        <SpeakerIcon />
        <NoticeText>
          中报预披露：于<Wide $ls={1.9}>2025-08-30</Wide>披露<Wide $ls={1.5}>2025</Wide>年中报
        </NoticeText>
        <RedDot />
        <Cross size={28} c="#999" />
      </Notice>

      <Periods>
        <Period $gap={18}>分时</Period>
        <Period $gap={7}>1分钟</Period>
        <Period $gap={-1}>5分钟</Period>
        <Period $gap={-13}>15分钟</Period>
        <Period $gap={11}>30分钟</Period>
        <Period $on $gap={-3}>
          五日
          <svg width="25" height="12" viewBox="-9 0 25 12" fill={ORANGE}><path d="M7.500 0L15 11H0z" /></svg>
        </Period>
        <GearIcon />
      </Periods>

      <Chips>
        <Chip />
        <Chip>日K</Chip>
        <Chip>周K</Chip>
        <Chip>月K</Chip>
        <Chip>季K</Chip>
        <Chip>年K</Chip>
        <Chip $on>五日</Chip>
        <ChipSetting>设置</ChipSetting>
      </Chips>

      <Legend>
        <Text $s={32.5} $c="#efb83c">均价：</Text>
        <Text $s={34} $c="#efb83c" $ls={-1.1} $mr={7}>30.91</Text>
        <Text $s={32.5} $c={RED}>最新：</Text>
        <Text $s={34} $c={RED} $ls={-2.6} $mr={19}>31.16</Text>
        <Text $s={34} $c={RED} $ls={-0.4} $mr={19}>0.56</Text>
        <Text $s={34} $c={RED} $ls={0}>1.83%</Text>
      </Legend>

      <PriceChart />

      <VolumeBar>
        <VolumePick>
          <Text $s={26.5} $c="#222">成交量</Text>
          <svg width="14" height="12" viewBox="0 0 14 12" fill="#666"><path d="M0 0H14L7 11.500z" /></svg>
        </VolumePick>
        <Text $s={34} $ls={-0.9} $mr={40}>12899</Text>
        <Text $s={32.5} $ls={0.2} $mr={42}>分时量:881↑</Text>
        <Text $s={32.5}>现量:</Text>
        <Text $s={34} $c={RED}>42</Text>
      </VolumeBar>

      <VolumeWrap>
        <VolumeChart />
        <Expand>
          <svg width="32" height="32" viewBox="0 0 32 32" fill="none" stroke={ORANGE} strokeWidth="3.400">
            <path d="M2 14V2H14M2 2L13 13M30 18V30H18M30 30L19 19" />
          </svg>
        </Expand>
      </VolumeWrap>
      <Dates>
        {['08/20', '08/21', '08/22', '08/25', '08/26'].map(d => (
          <Text key={d} $s={37.5} $c="#999">{d}</Text>
        ))}
      </Dates>

      <Banner>
        <HornIcon />
        <BannerText>免费模拟交易赢真现金，已有多人提现<Wide $ls={1.6}>2000</Wide>元</BannerText>
        <BannerRule />
        <Cross size={30} c={ORANGE} w={2.4} />
      </Banner>

      <Tabs>
        {TABS.map((t, i) => (
          <Tab key={t} $on={i === 0}>{t}</Tab>
        ))}
      </Tabs>

      <Cards>
        <Card>
          <PodiumArt />
          <CardHead>
            <PodiumBadge />
            <CardTitle>人气榜</CardTitle>
            <svg width="14" height="24" viewBox="0 0 14 24" fill="none" stroke="#aaa" strokeWidth="2.600"><path d="M2 2L12 12L2 22" /></svg>
          </CardHead>
          <Rank>A股市场排名第<Text $s={35} $c="#cf4a22" $w={500} $ls={0.2}>3386</Text>名</Rank>
        </Card>
        <Card>
          <VersusArt />
          <CardHead>
            <VsBadge />
            <CardTitle>多空看盘</CardTitle>
          </CardHead>
          <Vote>
            <VoteSide $gap={23}>
              <VoteDisc>
                <svg width="24" height="42" viewBox="0 0 24 42" fill="#e04416"><path d="M12 24.500L22 39Q23 41 21 41H3Q1 41 2 39z" /></svg>
              </VoteDisc>
              <VoteText $c="#d8431a">看涨<VotePct>**%</VotePct></VoteText>
            </VoteSide>
            <VoteSide $gap={18}>
              <VoteText $c="#3aa85c">看跌<VotePct>**%</VotePct></VoteText>
              <VoteDisc>
                <svg width="24" height="46" viewBox="0 0 24 46" fill="#3fb262"><path d="M12 45L22 30Q23 28 21 28H3Q1 28 2 30z" /></svg>
              </VoteDisc>
            </VoteSide>
          </Vote>
        </Card>
      </Cards>

      <Dock>
        <Index>
          <svg width="22" height="8" viewBox="0 0 22 8" fill="#777"><path d="M11 0L22 8H0z" /></svg>
          <IndexValue>3875.58</IndexValue>
          <IndexRow>
            <Text $s={32} $c={GREY}>上证</Text>
            <Text $s={36} $c={GREEN} $ls={-1.2}>-0.21%</Text>
          </IndexRow>
        </Index>
        <Trade $from="#f2524b" $to="#ec736d">买</Trade>
        <Trade $from="#3a76f8" $to="#6b97ff">卖</Trade>
        <Action $w={133}>
          <ActionIcon $drop={5}>撤</ActionIcon>
          <ActionLabel>撤单</ActionLabel>
        </Action>
        <Action $w={135}>
          <ActionIcon>
            <svg width="50" height="56" viewBox="0 0 50 56" fill="none" stroke="#333" strokeWidth="3.600">
              <path d="M22 3.500q3-1.800 6 0L44.500 13q2.500 1.500 2.500 4V39q0 2.500-2.500 4L28 52.500q-3 1.800-6 0L5.500 43Q3 41.500 3 39V17q0-2.500 2.500-4z" />
              <circle cx="25" cy="28" r="8.500" />
            </svg>
          </ActionIcon>
          <ActionLabel>设自选</ActionLabel>
        </Action>
        <Action $w={134}>
          <ActionIcon $drop={3}>
            <svg width="44" height="10" viewBox="0 0 44 10" fill="#333">
              <circle cx="5" cy="5" r="4.400" /><circle cx="22" cy="5" r="4.400" /><circle cx="39" cy="5" r="4.400" />
            </svg>
          </ActionIcon>
          <ActionLabel>更多</ActionLabel>
        </Action>
      </Dock>
      <HomeArea><HomeBar /></HomeArea>
    </Page>
  );
}
